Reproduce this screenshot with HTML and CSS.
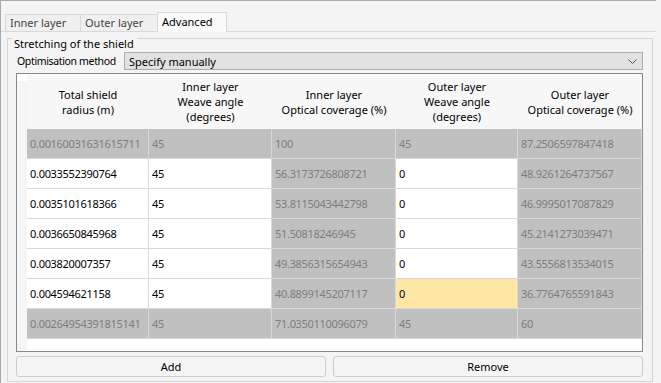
FILE: index.html
```html
<!DOCTYPE html>
<html lang="en">
<head>
    <meta charset="UTF-8">
    <title>Shield - Advanced</title>
    <link rel="stylesheet" href="styles.css">
</head>
<body>
<div class="window">
    <div class="tabs">
        <div class="tab">Inner layer</div>
        <div class="tab">Outer layer</div>
        <div class="tab active">Advanced</div>
    </div>
    <div class="pane">
        <div class="group">
            <div class="group-title">Stretching of the shield</div>
            <div class="method-row">
                <label class="method-label">Optimisation method</label>
                <div class="combo">
                    <span>Specify manually</span>
                    <svg width="9" height="5" viewBox="0 0 9 5"><path d="M0.5 0.5 L4.5 4.5 L8.5 0.5" fill="none" stroke="#555" stroke-width="1"/></svg>
                </div>
            </div>
            <div class="table-frame">
                <div class="vheader"></div>
                <div class="table-area">
                    <table class="grid">
                        <colgroup>
                            <col class="c1"><col class="c2"><col class="c3"><col class="c4"><col class="c5">
                        </colgroup>
                        <thead>
                            <tr>
                                <th>Total shield<br>radius (m)</th>
                                <th>Inner layer<br>Weave angle<br>(degrees)</th>
                                <th>Inner layer<br>Optical coverage (%)</th>
                                <th>Outer layer<br>Weave angle<br>(degrees)</th>
                                <th>Outer layer<br>Optical coverage (%)</th>
                            </tr>
                        </thead>
                        <tbody>
                            <tr class="locked">
                                <td>0.00160031631615711</td><td>45</td><td>100</td><td>45</td><td>87.2506597847418</td>
                            </tr>
                            <tr>
                                <td>0.0033552390764</td><td>45</td><td class="ro">56.3173726808721</td><td>0</td><td class="ro">48.9261264737567</td>
                            </tr>
                            <tr>
                                <td>0.0035101618366</td><td>45</td><td class="ro">53.8115043442798</td><td>0</td><td class="ro">46.9995017087829</td>
                            </tr>
                            <tr>
                                <td>0.0036650845968</td><td>45</td><td class="ro">51.50818246945</td><td>0</td><td class="ro">45.2141273039471</td>
                            </tr>
                            <tr>
                                <td>0.003820007357</td><td>45</td><td class="ro">49.3856315654943</td><td>0</td><td class="ro">43.5556813534015</td>
                            </tr>
                            <tr>
                                <td>0.004594621158</td><td>45</td><td class="ro">40.8899145207117</td><td class="current">0</td><td class="ro">36.7764765591843</td>
                            </tr>
                            <tr class="locked">
                                <td>0.00264954391815141</td><td>45</td><td>71.0350110096079</td><td>45</td><td>60</td>
                            </tr>
                        </tbody>
                    </table>
                </div>
            </div>
            <div class="buttons">
                <button>Add</button>
                <button>Remove</button>
            </div>
        </div>
    </div>
</div>
</body>
</html>
```

FILE: styles.css
```css
body {
    margin: 0;
    background: #f3f3f3;
    font-family: "Noto Sans", sans-serif;
    font-size: 11px;
    color: #000;
}
.window {
    width: 656px;
    height: 383px;
    box-sizing: border-box;
    border-top: 1px solid #a9a9a9;
    border-left: 1px solid #a9a9a9;
    background: #f4f4f4;
}
.tabs {
    display: flex;
    align-items: flex-end;
    padding: 10px 0 0 4px;
    height: 20px;
}
.tab {
    box-sizing: border-box;
    height: 17px;
    padding: 0 4px;
    line-height: 15px;
    color: #444;
    background: #f0f0f0;
    border: 1px solid #d9d9d9;
    border-bottom: none;
    margin-right: -1px;
}
.tab:nth-child(1) { width: 76px; }
.tab:nth-child(2) { width: 78px; }
.tab.active {
    width: 70px;
    height: 20px;
    margin-bottom: -1px;
    line-height: 18px;
    color: #000;
    background: #fafafa;
    position: relative;
}
.pane {
    border-top: 1px solid #d9d9d9;
    padding: 6px 0 0 6px;
}
.group {
    position: relative;
    width: 646px;
    height: 344px;
    box-sizing: border-box;
    border: 1px solid #d5d5d5;
    padding: 13px 9px 0 8px;
}
.group-title {
    position: absolute;
    top: -2px;
    left: 4px;
    padding: 0 3px 0 2px;
    background: #f4f4f4;
    line-height: 14px;
}
.method-row {
    display: flex;
    align-items: center;
    height: 18px;
}
.method-label {
    flex: none;
    width: 107px;
    padding-left: 1px;
    white-space: nowrap;
    font-size: 10.5px;
    letter-spacing: -0.35px;
}
.combo {
    flex: 1;
    height: 18px;
    box-sizing: border-box;
    display: flex;
    align-items: center;
    justify-content: space-between;
    padding: 0 5px 0 4px;
    background: #e1e1e1;
    border: 1px solid #adadad;
}
.table-frame {
    margin-top: 3px;
    display: flex;
    width: 627px;
    height: 279px;
    box-sizing: border-box;
    border: 1px solid #858a91;
    background: #fff;
}
.vheader {
    width: 10px;
    background: #f5f5f5;
    border-top: 7px solid #fff;
}
.table-area {
    flex: 1;
}
.grid {
    table-layout: fixed;
    width: 615px;
    border-collapse: separate;
    border-spacing: 0;
}
.c1 { width: 122px; }
.c2 { width: 123px; }
.c3 { width: 124px; }
.c4 { width: 122px; }
.c5 { width: 124px; }
.grid th {
    height: 55px;
    padding: 0;
    font-weight: normal;
    line-height: 15px;
    background: #f7f7f7;
    text-align: center;
    vertical-align: middle;
}
.grid td {
    height: 30px;
    box-sizing: border-box;
    padding: 0 3px;
    border-right: 1px solid #d9d9d9;
    border-bottom: 1px solid #d9d9d9;
    white-space: nowrap;
    overflow: hidden;
    letter-spacing: -0.3px;
}
.grid td.ro,
.grid tr.locked td {
    background: #c0c0c0;
    color: #7d7d7d;
}
.grid td.current {
    background: #ffe8a6;
}
.buttons {
    display: flex;
    gap: 7px;
    margin-top: 4px;
}
.buttons button {
    width: 310px;
    height: 21px;
    font-family: inherit;
    font-size: 11px;
    background: #f5f5f5;
    border: 1px solid #cdcdcd;
    border-radius: 3px;
}
```
